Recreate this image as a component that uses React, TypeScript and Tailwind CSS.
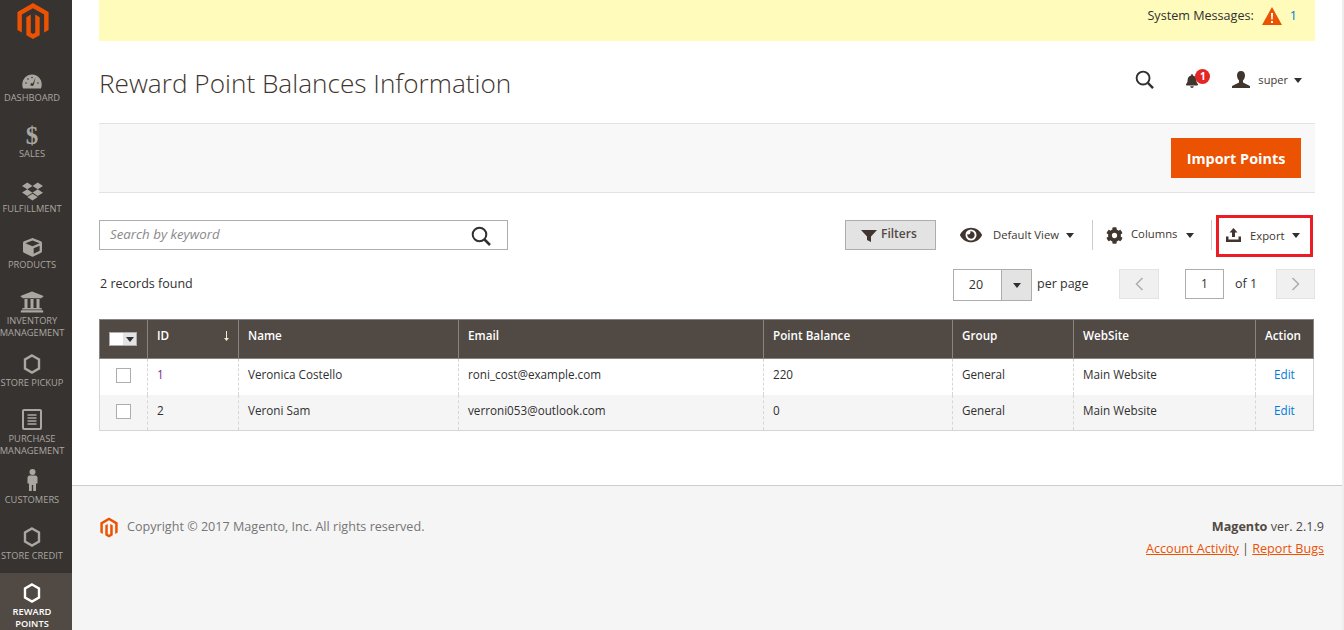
import { FaBell, FaCog, FaCube, FaDropbox, FaEye, FaUniversity } from 'react-icons/fa';

const logoPath = 'M12 24l-4.455-2.572v-12l2.97-1.715v12.001l1.485.902 1.485-.902V7.713l2.971 1.715v12L12 24zM22.391 6v12l-2.969 1.714V7.713L12 3.43 4.574 7.713v12L1.609 18V6L12 0l10.391 6z';

function Hex({ active }: { active?: boolean }) {
  return <svg width="18" height="20" viewBox="0 0 18 20" className={active ? 'text-white' : 'text-[#aaa6a0]'}><polygon points="9,1.5 16,5.5 16,14.5 9,18.5 2,14.5 2,5.5" fill="none" stroke="currentColor" strokeWidth="2.4" /></svg>;
}

function Gauge() {
  return <svg width="20" height="15" viewBox="0 0 20 15"><path d="M10 0.5C4.5 0.5 0.3 5 0.3 10.5c0 1.5.3 3 .9 4h17.6c.6-1 .9-2.5.9-4C19.7 5 15.500.5 10 .5z" fill="#aaa6a0" /><path d="M13.500 3.500L10.800 9.500 9 9l-.6 2.500 2.500.5 1-1.800z" fill="#373330" /><circle cx="4" cy="9" r=".8" fill="#373330" /><circle cx="6" cy="5" r=".8" fill="#373330" /><circle cx="10" cy="3.500" r=".8" fill="#373330" /><circle cx="16" cy="9" r=".8" fill="#373330" /></svg>;
}

function PurchaseIcon() {
  return <svg width="20" height="21" viewBox="0 0 20 21"><rect x="1" y="1" width="18" height="19" rx="1" fill="none" stroke="#aaa6a0" strokeWidth="2" /><path d="M5.500 6h9M5.500 9h9M5.500 12h9M5.500 15h9" stroke="#aaa6a0" strokeWidth="1.500" /></svg>;
}

function Person() {
  return <svg width="11" height="22" viewBox="0 0 11 22" fill="#aaa6a0"><circle cx="5.500" cy="3" r="3" /><path d="M2 6.500h7l1.500 1.500v6.500H9V22H6.200v-6h-1.400v6H2v-7.500H.500V8z" /></svg>;
}

const navItems = [
  { label: ['Dashboard'], h: 'h-[47px]', icon: <Gauge />, gap: 'mb-[3px]' },
  { label: ['Sales'], h: 'h-[56px]', icon: <span className="block font-['Liberation_Serif',serif] text-[25px] leading-[19px] font-bold">$</span>, gap: 'mb-[3px]' },
  { label: ['Fulfillment'], h: 'h-[55px]', icon: <FaDropbox size={21} />, gap: 'mb-[1px]' },
  { label: ['Products'], h: 'h-[56px]', icon: <FaCube size={19} />, gap: 'mb-[2px]' },
  { label: ['Inventory', 'Management'], h: 'h-[68px]', icon: <FaUniversity size={24} />, gap: 'mb-[1px]' },
  { label: ['Store Pickup'], h: 'h-[50px]', icon: <Hex />, gap: 'mb-[3px]' },
  { label: ['Purchase', 'Management'], h: 'h-[68px]', icon: <PurchaseIcon />, gap: 'mb-[3px]' },
  { label: ['Customers'], h: 'h-[49px]', icon: <Person />, gap: 'mb-[3px]' },
  { label: ['Store Credit'], h: 'h-[56px]', icon: <Hex />, gap: 'mb-[3px]' },
];

function Caret({ className = '' }: { className?: string }) {
  return <span className={`inline-block w-0 h-0 border-x-[4px] border-x-transparent border-t-[5px] border-t-[#303030] ${className}`} />;
}

function SearchIcon({ size }: { size: number }) {
  return <svg width={size} height={size} viewBox="0 0 20 20" fill="none" stroke="#303030" strokeWidth="2"><circle cx="8.500" cy="8.500" r="6.800" /><path d="M13.500 13.500l5.500 5.500" strokeWidth="2.500" /></svg>;
}

const rows = [
  { id: '1', name: 'Veronica Costello', email: 'roni_cost@example.com', points: '220' },
  { id: '2', name: 'Veroni Sam', email: 'verroni053@outlook.com', points: '0' },
];

export default function App() {
  return <div className="flex h-[630px] overflow-hidden bg-white font-['Open_Sans',sans-serif] text-[#303030]">
    <aside className="w-[72px] shrink-0 bg-[#373330] text-[#aaa6a0] overflow-hidden">
      <div className="h-[57px] pt-[3px] pr-[7px] flex justify-center"><svg width="36" height="36" viewBox="0 0 24 24" fill="#eb5202"><path d={logoPath} /></svg></div>
      {navItems.map((item) => <div key={item.label[0]} className={`${item.h} pr-[8px] flex flex-col items-center justify-end`}>
        <div className={item.gap}>{item.icon}</div>
        {item.label.map((l) => <div key={l} className="text-[9.300px] leading-[12px] uppercase whitespace-nowrap">{l}</div>)}
      </div>)}
      <div className="mt-[11px] h-[57px] bg-[#514943] text-white pr-[8px] flex flex-col items-center pt-[10px]">
        <div className="mb-[3px]"><Hex active /></div>
        <div className="text-[9.300px] leading-[12px] uppercase font-semibold">Reward</div>
        <div className="text-[9.300px] leading-[12px] uppercase font-semibold">Points</div>
      </div>
    </aside>

    <div className="flex-1 flex flex-col min-w-0">
      <main className="h-[485px] pl-[27px] pr-[27px]">
        <div className="h-[41px] bg-[#fffbbb] flex items-start justify-end pt-[7px] pr-[18px] text-[12.600px] leading-[17px]">
          <span>System Messages:</span>
          <svg width="20" height="18" viewBox="0 0 20 18" className="ml-[8px]"><path d="M10 0l10 18H0z" fill="#eb5202" /><path d="M9 6h2l-.3 6.500H9.300zM9 14h2v2H9z" fill="#fff" /></svg>
          <span className="ml-[8px] text-[#007bdb]">1</span>
        </div>
        <div className="h-[82px] flex items-center">
          <h1 className="text-[26.200px] font-light text-[#41362f] leading-none mt-[3px]">Reward Point Balances Information</h1>
          <div className="ml-auto flex items-center -mt-[4px] mr-[13px]">
            <span className="-mt-[2px]"><SearchIcon size={19} /></span>
            <div className="relative ml-[31px] mt-[2px]"><FaBell size={14} className="text-[#41362f]" /><span className="absolute -top-[5px] left-[10px] w-[15px] h-[15px] rounded-full bg-[#e22626] text-white text-[10px] font-bold leading-[15px] text-center">1</span></div>
            <svg width="18" height="18" viewBox="0 0 18 18" fill="#41362f" className="ml-[33px]"><path d="M9 0c2.700 0 4 2 4 4.500 0 2-1 4-2 5v2l7 3.500v2H0v-2l7-3.500v-2c-1-1-2-3-2-5C5 2 6.300 0 9 0z" /></svg>
            <span className="ml-[8px] text-[11.100px] text-[#41362f]">super</span>
            <Caret className="ml-[6px]" />
          </div>
        </div>
        <div className="h-[70px] bg-[#f8f8f8] border-y border-[#e3e3e3] flex items-center justify-end pr-[14px]">
          <button className="w-[130px] h-[40px] bg-[#eb5202] text-white text-[14.400px] font-bold pt-[1px]">Import Points</button>
        </div>

        <div className="mt-[27px] h-[30px] flex items-center relative">
          <div className="w-[409px] h-[30px] border border-[#adadad] flex items-center px-[10px] bg-white">
            <span className="italic text-[13.300px] text-[#8a8a8a] flex-1">Search by keyword</span>
            <span className="mr-[6px] mt-[1px]"><SearchIcon size={20} /></span>
          </div>
          <button className="ml-[337px] w-[91px] h-[30px] bg-[#e3e3e3] border border-[#adadad] flex items-center pl-[15px] text-[12px] font-semibold text-[#514943] leading-[26px]">
            <svg width="16" height="12" viewBox="0 0 16 12" fill="#41362f" className="mr-[4px] mt-[1px]"><path d="M0 0h16l-6 6.500V12l-4-2V6.500z" /></svg>
            <span className="-mt-[2px]">Filters</span>
          </button>
          <FaEye size={22} className="ml-[24px] text-[#41362f]" />
          <span className="ml-[11px] w-[65px] text-[11.300px] text-[#41362f] whitespace-nowrap">Default View</span>
          <Caret className="ml-[8px]" />
          <span className="ml-[18px] w-px h-[30px] bg-[#ccc]" />
          <FaCog size={17} className="ml-[13px] text-[#41362f]" />
          <span className="ml-[8px] w-[47px] text-[11.300px] text-[#41362f] -mt-[1px]">Columns</span>
          <Caret className="ml-[8px]" />
          <span className="ml-[17px] w-px h-[30px] bg-[#ccc]" />
          <svg width="15" height="14" viewBox="0 0 15 14" fill="#41362f" className="ml-[14px]"><path d="M7.500 0l4 4.500H9v4.500H6V4.500H3.500z" /><path d="M0 8.500h2.500V11.500h10V8.500H15V14H0z" /></svg>
          <span className="ml-[9px] w-[34px] text-[11.300px] text-[#41362f] mt-[2px]">Export</span>
          <Caret className="ml-[8px]" />
          <div className="absolute left-[1117px] -top-[5px] w-[97px] h-[42px] border-[3px] border-[#ed1c24]" />
        </div>

        <div className="mt-[19px] h-[32px] flex items-start">
          <span className="text-[12.500px] leading-[30px] ml-[1px] whitespace-nowrap">2 records found</span>
          <div className="ml-auto w-[79px] h-[32px] border border-[#adadad] flex">
            <span className="flex-1 text-center text-[12.500px] leading-[30px] pr-[3px]">20</span>
            <span className="w-[30px] bg-[#e3e3e3] border-l border-[#adadad] flex items-center justify-center"><Caret /></span>
          </div>
          <span className="ml-[5px] w-[82px] text-[12.500px] leading-[30px] whitespace-nowrap">per page</span>
          <button className="w-[40px] h-[30px] bg-[#f0f0f0] border border-[#e3e3e3] flex items-center justify-center"><svg width="9" height="14" viewBox="0 0 9 14" fill="none" stroke="#adadad" strokeWidth="1.500"><path d="M7.500 1L1.500 7l6 6" /></svg></button>
          <span className="ml-[26px] w-[39px] h-[30px] border border-[#adadad] text-center text-[12px] leading-[28px]">1</span>
          <span className="ml-[11px] w-[41px] text-[12.500px] leading-[30px] whitespace-nowrap">of 1</span>
          <button className="w-[39px] h-[30px] bg-[#f0f0f0] border border-[#e3e3e3] flex items-center justify-center"><svg width="9" height="14" viewBox="0 0 9 14" fill="none" stroke="#adadad" strokeWidth="1.500"><path d="M1.500 1l6 6-6 6" /></svg></button>
        </div>

        <table className="mt-[18px] w-[1215px] table-fixed border-collapse text-[11.700px] border-x border-b border-[#d6d6d6]">
          <thead>
            <tr className="h-[39px] bg-[#514943] text-white text-left">
              <th className="w-[48px] border border-[#8a837f] px-[9px]"><span className="flex w-[28px] h-[14px] border border-[#adadad]"><span className="flex-1 bg-white" /><span className="w-[13px] bg-[#e3e3e3] flex items-center justify-center"><Caret /></span></span></th>
              <th className="w-[91px] border border-[#8a837f] pl-[9px] pr-[9px] pb-[6px] font-semibold"><div className="flex justify-between items-center">ID<svg width="5" height="10" viewBox="0 0 5 10" className="text-[#f4e9cd]" fill="currentColor"><path d="M2 0h1v7h2L2.500 10 0 7h2z" /></svg></div></th>
              <th className="w-[220px] border border-[#8a837f] px-[9px] pb-[6px] font-semibold">Name</th>
              <th className="w-[305px] border border-[#8a837f] px-[9px] pb-[6px] font-semibold">Email</th>
              <th className="w-[189px] border border-[#8a837f] px-[9px] pb-[6px] font-semibold">Point Balance</th>
              <th className="w-[121px] border border-[#8a837f] px-[9px] pb-[6px] font-semibold">Group</th>
              <th className="w-[182px] border border-[#8a837f] px-[9px] pb-[6px] font-semibold">WebSite</th>
              <th className="border border-[#8a837f] px-[9px] pb-[6px] font-semibold">Action</th>
            </tr>
          </thead>
          <tbody>
            {rows.map((r, i) => <tr key={r.id} className={`h-[36px] ${i % 2 ? 'bg-[#f5f5f5]' : 'bg-white'}`}>
              <td className="border-r border-dashed border-[#d6d6d6] pl-[16px] pb-[2px]"><span className="block w-[15px] h-[15px] border border-[#adadad] bg-white" /></td>
              <td className="border-r border-dashed border-[#d6d6d6] px-[9px] pb-[3px]"><span className={i === 0 ? 'text-[#7c2a91]' : ''}>{r.id}</span></td>
              <td className="border-r border-dashed border-[#d6d6d6] px-[9px] pb-[3px]">{r.name}</td>
              <td className="border-r border-dashed border-[#d6d6d6] px-[9px] pb-[3px]">{r.email}</td>
              <td className="border-r border-dashed border-[#d6d6d6] px-[9px] pb-[3px]">{r.points}</td>
              <td className="border-r border-dashed border-[#d6d6d6] px-[9px] pb-[3px]">General</td>
              <td className="border-r border-dashed border-[#d6d6d6] px-[9px] pb-[3px]">Main Website</td>
              <td className="px-[18px] pb-[3px] text-[#007bdb]">Edit</td>
            </tr>)}
          </tbody>
        </table>
      </main>

      <footer className="flex-1 bg-[#f5f5f5] border-t border-[#cccccc] pl-[27px] pr-[18px] pt-[31px] flex justify-between">
        <div className="flex items-start">
          <svg width="20" height="21" viewBox="0 0 24 24" fill="#eb5202"><path d={logoPath} /></svg>
          <span className="ml-[8px] text-[12.600px] leading-[20px] text-[#757575]">Copyright © 2017 Magento, Inc. All rights reserved.</span>
        </div>
        <div className="text-right text-[12.600px] leading-[22px] text-[#514943] -mt-[1px]">
          <div><span className="font-bold">Magento</span> ver. 2.1.9</div>
          <div><a className="underline text-[#eb5202]">Account Activity</a> | <a className="underline text-[#eb5202]">Report Bugs</a></div>
        </div>
      </footer>
    </div>
    <div className="w-[2px] shrink-0 bg-[#eeeeee]" />
  </div>;
}
